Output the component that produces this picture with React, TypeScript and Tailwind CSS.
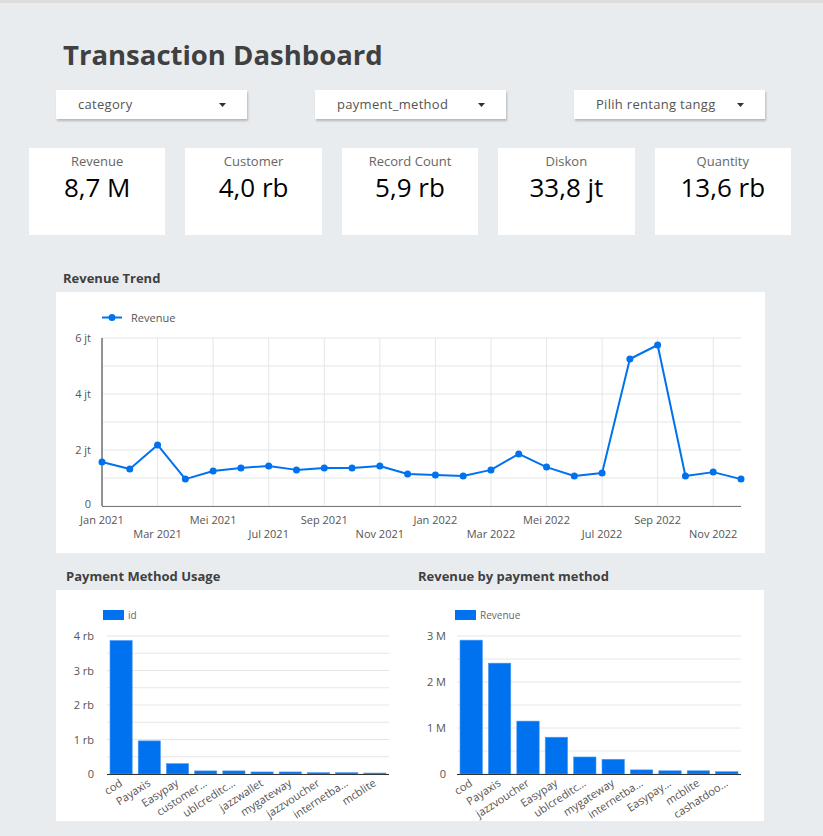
import React from 'react';

const BLUE = '#0072f0';

const kpis = [
  { label: 'Revenue', value: '8,7 M' },
  { label: 'Customer', value: '4,0 rb' },
  { label: 'Record Count', value: '5,9 rb' },
  { label: 'Diskon', value: '33,8 jt' },
  { label: 'Quantity', value: '13,6 rb' },
];

const filters = ['category', 'payment_method', 'Pilih rentang tangg'];

// monthly revenue in jt, Jan 2021 - Dec 2022
const trend = [
  1.57, 1.32, 2.18, 0.96, 1.25, 1.36, 1.43, 1.29, 1.36, 1.36, 1.43, 1.14,
  1.11, 1.07, 1.29, 1.86, 1.39, 1.07, 1.18, 5.25, 5.75, 1.07, 1.21, 0.96,
];

const monthTicks = [
  'Jan 2021', 'Mar 2021', 'Mei 2021', 'Jul 2021', 'Sep 2021', 'Nov 2021',
  'Jan 2022', 'Mar 2022', 'Mei 2022', 'Jul 2022', 'Sep 2022', 'Nov 2022',
];

function Dropdown({ label }: { label: string }) {
  return (
    <div className="w-[191px] h-[29px] bg-white shadow-[1px_2px_2px_rgba(0,0,0,0.22)] flex items-center justify-between pl-[22px] pr-[21px]">
      <span className="text-[13px] text-[#555] tracking-[0.3px]">{label}</span>
      <svg width="7" height="4" viewBox="0 0 7 4">
        <path d="M0 0h7L3.5 4z" fill="#333" />
      </svg>
    </div>
  );
}

function TrendChart() {
  const x0 = 46;
  const x1 = 685;
  const yTop = 46;
  const yBot = 214;
  const step = (x1 - x0) / 23;
  const sy = (yBot - yTop) / 6;
  const pts = trend.map((v, i) => [x0 + i * step, yBot - v * sy]);

  return (
    <svg width="709" height="261" className="block">
      {/* legend */}
      <line x1="46" y1="25.5" x2="66" y2="25.5" stroke={BLUE} strokeWidth="2" />
      <circle cx="56" cy="25.5" r="3.5" fill={BLUE} />
      <text x="75" y="29.5" fontSize="11" fill="#555">Revenue</text>

      {/* horizontal grid */}
      {[0, 1, 2, 3, 4, 5, 6].map((i) => (
        <line key={i} x1={x0} x2={x1} y1={yBot - i * sy} y2={yBot - i * sy} stroke="#e6e6e6" strokeWidth="1" />
      ))}
      {/* vertical grid */}
      {monthTicks.map((_, i) => (
        <line key={i} x1={x0 + i * 2 * step} x2={x0 + i * 2 * step} y1={yTop} y2={yBot} stroke="#e6e6e6" strokeWidth="1" />
      ))}
      <line x1={x0} x2={x0} y1={yTop} y2={yBot} stroke="#333" strokeWidth="1" />
      <line x1={x0} x2={x1} y1={yBot + 0.5} y2={yBot + 0.5} stroke="#777" strokeWidth="1" />

      {/* y labels */}
      {['0', '', '2 jt', '', '4 jt', '', '6 jt'].map((t, i) =>
        t ? (
          <text key={i} x="35" y={yBot - i * sy + (i === 0 ? 2 : 4)} fontSize="11" fill="#555" textAnchor="end">{t}</text>
        ) : null
      )}

      {/* x labels */}
      {monthTicks.map((t, i) => (
        <text key={t} x={x0 + i * 2 * step} y={i % 2 === 0 ? 232 : 246} fontSize="11" fill="#555" textAnchor="middle">{t}</text>
      ))}

      <polyline points={pts.map((p) => p.join(',')).join(' ')} fill="none" stroke={BLUE} strokeWidth="2" strokeLinejoin="round" />
      {pts.map((p, i) => (
        <circle key={i} cx={p[0]} cy={p[1]} r="3.5" fill={BLUE} />
      ))}
    </svg>
  );
}

type BarProps = {
  legend: string;
  labels: string[];
  values: number[];
  max: number;
  ticks: string[];
  x0: number;
  x1: number;
  labelX: number;
  legendX: number;
};

function BarChart({ legend, labels, values, max, ticks, x0, x1, labelX, legendX }: BarProps) {
  const yTop = 46;
  const yBot = 184;
  const slot = (x1 - x0) / labels.length;
  const sy = (yBot - yTop) / max;
  const halves = [];
  for (let v = 0; v <= max; v += 0.5) halves.push(v);

  return (
    <svg width="354" height="231" className="block">
      <rect x={legendX} y="20" width="21" height="10" fill={BLUE} />
      <text x={legendX + 25} y="29" fontSize="10" fill="#666">{legend}</text>

      {halves.map((v) => (
        <line key={v} x1={x0} x2={x1} y1={yBot - v * sy} y2={yBot - v * sy} stroke="#e6e6e6" strokeWidth="1" />
      ))}
      {ticks.map((t, i) => (
        <text key={t} x={labelX} y={yBot - i * sy + 4} fontSize="11" fill="#555" textAnchor="end">{t}</text>
      ))}

      {values.map((v, i) => {
        const h = Math.max(v * sy, 1);
        return (
          <rect key={i} x={x0 + i * slot + 3} y={yBot - h} width={slot - 6} height={h} fill={BLUE} stroke="#4d9bf5" strokeWidth="0.6" />
        );
      })}
      <line x1={x0} x2={x1} y1={yBot + 0.5} y2={yBot + 0.5} stroke="#333" strokeWidth="1" />

      {labels.map((l, i) => {
        const cx = x0 + i * slot + slot / 2 + 2;
        return (
          <text key={l + i} x={cx} y={195} fontSize="11" fill="#555" textAnchor="end" transform={`rotate(-33 ${cx} 195)`}>{l}</text>
        );
      })}
    </svg>
  );
}

export default function App() {
  return (
    <div className="min-h-screen w-[823px] bg-[#e9ecef] border-t-[3px] border-[#dddddd] font-['Open_Sans',sans-serif]">
      <h1 className="pl-[63px] pt-[36px] text-[27.5px] leading-[32px] font-bold text-[#404040]">Transaction Dashboard</h1>

      <div className="flex gap-[68px] pl-[56px] mt-[19px]">
        {filters.map((f) => (
          <Dropdown key={f} label={f} />
        ))}
      </div>

      <div className="grid grid-cols-5 gap-[20px] pl-[29px] w-[791px] mt-[29px]">
        {kpis.map((k) => (
          <div key={k.label} className="h-[87px] bg-white flex flex-col items-center pt-[6px]">
            <span className="text-[13px] leading-[15px] text-[#666]">{k.label}</span>
            <span className="mt-[4px] text-[26px] leading-[28px] text-black">{k.value}</span>
          </div>
        ))}
      </div>

      <h2 className="pl-[63px] mt-[34px] text-[13px] leading-[18px] font-bold text-[#404040]">Revenue Trend</h2>
      <div className="ml-[56px] mt-[5px] w-[709px] h-[261px] bg-white">
        <TrendChart />
      </div>

      <div className="flex pl-[66px] mt-[14px]">
        <h2 className="w-[352px] text-[13px] leading-[18px] font-bold text-[#404040]">Payment Method Usage</h2>
        <h2 className="text-[13px] leading-[18px] font-bold text-[#404040]">Revenue by payment method</h2>
      </div>
      <div className="ml-[56px] mt-[5px] w-[708px] h-[231px] bg-white flex">
        <BarChart
          legend="id"
          labels={['cod', 'Payaxis', 'Easypay', 'customer…', 'ublcreditc…', 'jazzwallet', 'mygateway', 'jazzvoucher', 'internetba…', 'mcblite']}
          values={[3.87, 0.96, 0.3, 0.09, 0.09, 0.06, 0.06, 0.04, 0.04, 0.01]}
          max={4}
          ticks={['0', '1 rb', '2 rb', '3 rb', '4 rb']}
          x0={51}
          x1={333}
          labelX={38}
          legendX={47}
        />
        <BarChart
          legend="Revenue"
          labels={['cod', 'Payaxis', 'jazzvoucher', 'Easypay', 'ublcreditc…', 'mygateway', 'internetba…', 'Easypay…', 'mcblite', 'cashatdoo…']}
          values={[2.91, 2.41, 1.15, 0.8, 0.37, 0.32, 0.09, 0.07, 0.07, 0.05]}
          max={3}
          ticks={['0', '1 M', '2 M', '3 M']}
          x0={47}
          x1={331}
          labelX={36}
          legendX={45}
        />
      </div>
    </div>
  );
}
